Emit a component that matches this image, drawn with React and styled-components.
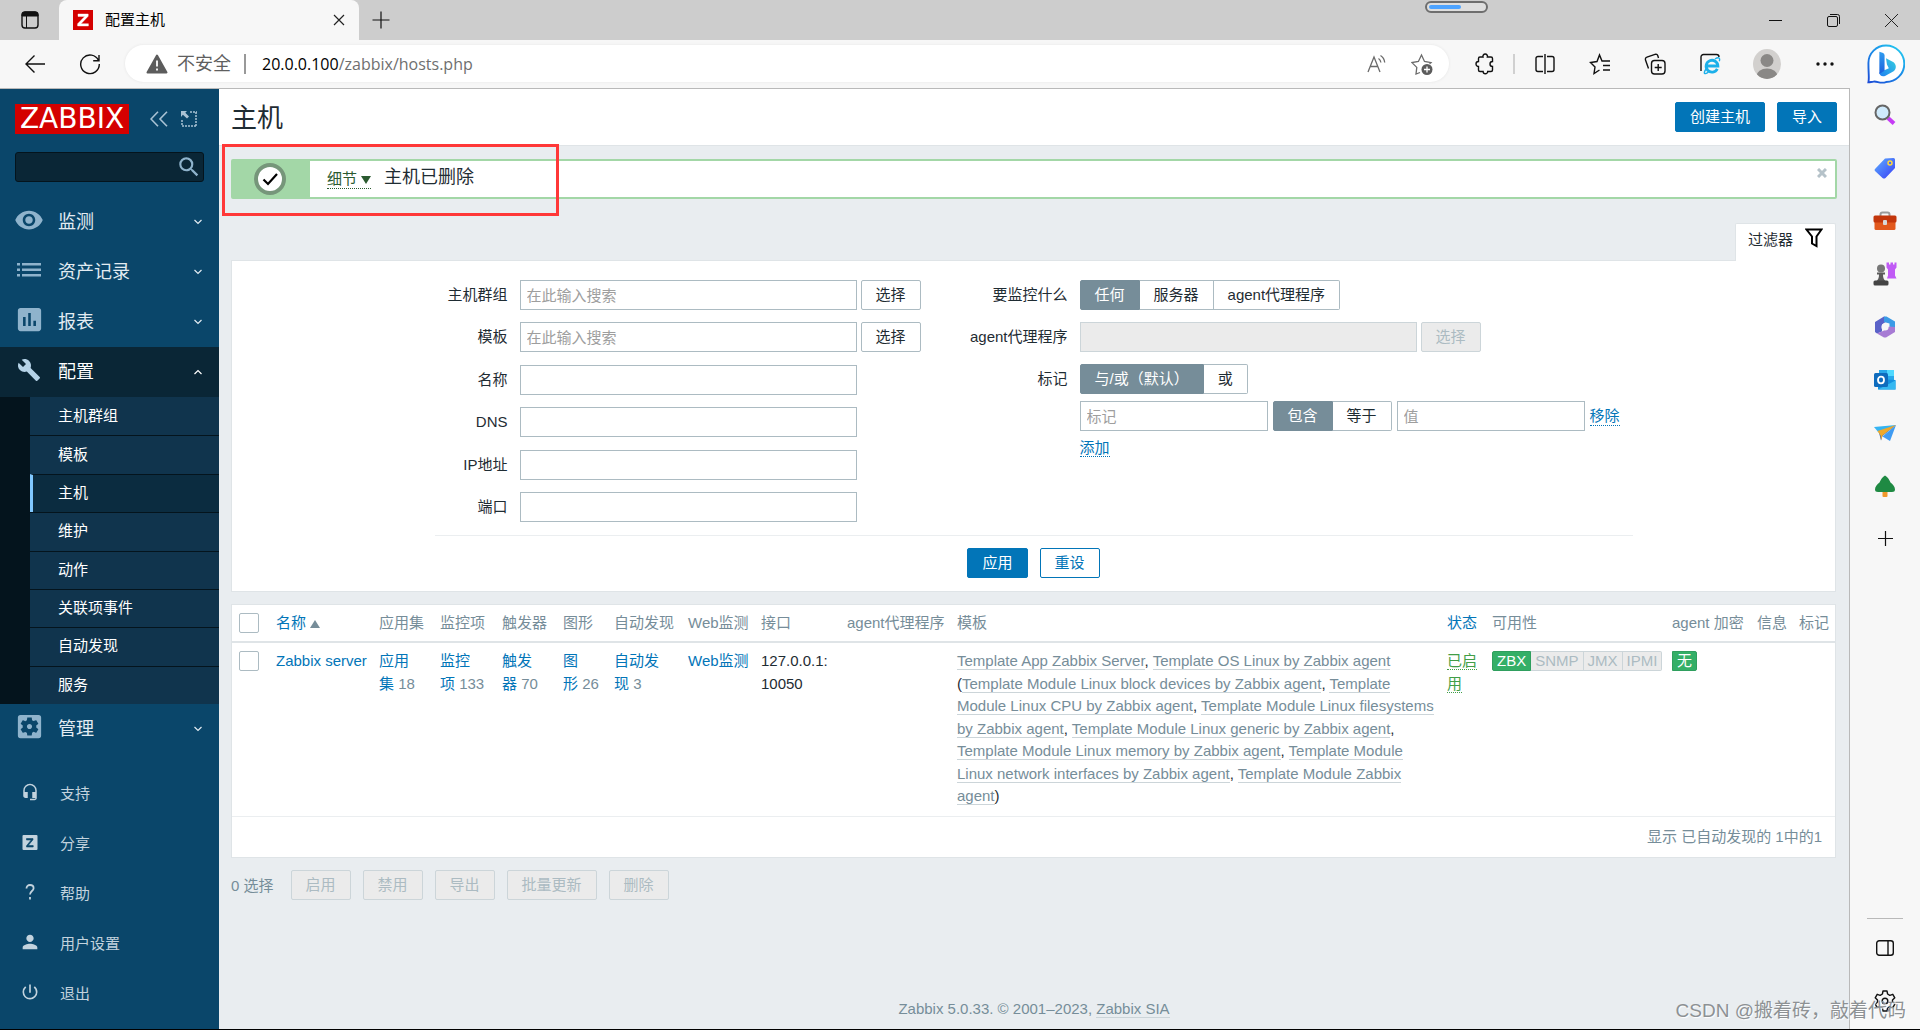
import React from 'react';
import styled, { createGlobalStyle, css } from 'styled-components';
import {
    MdVisibility,
    MdAssessment,
    MdBuild,
    MdSettingsApplications,
    MdHeadsetMic,
    MdPerson,
    MdPowerSettingsNew,
    MdSearch,
} from 'react-icons/md';

const subMenu = ['主机群组', '模板', '主机', '维护', '动作', '关联项事件', '自动发现', '服务'];

const templates = [
    'Template Module Linux block devices by Zabbix agent',
    'Template Module Linux CPU by Zabbix agent',
    'Template Module Linux filesystems by Zabbix agent',
    'Template Module Linux generic by Zabbix agent',
    'Template Module Linux memory by Zabbix agent',
    'Template Module Linux network interfaces by Zabbix agent',
    'Template Module Zabbix agent',
];

const columnWidths = [36, 103, 61, 62, 61, 51, 74, 73, 86, 110, null, 45, 180, 85, 42, 44];

const App = () => {
    return (
        <Window>
            <GlobalStyle />
            <TabBar />
            <Toolbar />
            <Body>
                <Sidebar />
                <Content>
                    <PageHeader>
                        <h1>主机</h1>
                        <HeaderButtons>
                            <Button $primary>创建主机</Button>
                            <Button $primary>导入</Button>
                        </HeaderButtons>
                    </PageHeader>
                    <Message />
                    <Filter />
                    <HostTable />
                    <ActionBar>
                        <span>0 选择</span>
                        {['启用', '禁用', '导出', '批量更新', '删除'].map((text) => (
                            <Button key={text} disabled>
                                {text}
                            </Button>
                        ))}
                    </ActionBar>
                    <PageFooter>
                        Zabbix 5.0.33. © 2001–2023, <GreyLink href="#sia">Zabbix SIA</GreyLink>
                    </PageFooter>
                    <Highlight />
                </Content>
                <EdgeSidebar />
            </Body>
            <Watermark>CSDN @搬着砖，敲着代码</Watermark>
        </Window>
    );
};

export default App;

const TabBar = () => (
    <TabStrip>
        <StripButton aria-label="标签操作" $width={59}>
            <svg width="18" height="18" viewBox="0 0 18 18" fill="none" stroke="#111">
                <rect x="1" y="1" width="16" height="16" rx="3" strokeWidth="1.4" />
                <path d="M1 4a3 3 0 0 1 3-3h10a3 3 0 0 1 3 3v1H1z" fill="#111" />
                <path d="M5.500 5v12" />
            </svg>
        </StripButton>
        <Tab>
            <Favicon viewBox="0 0 20 20">
                <rect width="20" height="20" fill="#d40000" />
                <path d="M5 4h10.200v2.200L8 13.700h7.400V16H4.600v-2.200L11.700 6.400H5z" fill="#fff" stroke="#fff" strokeWidth=".4" />
            </Favicon>
            <TabTitle>配置主机</TabTitle>
            <TabClose aria-label="关闭标签页">
                <svg width="12" height="12" viewBox="0 0 12 12" stroke="#222" strokeWidth="1.200">
                    <path d="M1 1l10 10M11 1L1 11" />
                </svg>
            </TabClose>
        </Tab>
        <StripButton aria-label="新建标签页" $width={43}>
            <svg width="18" height="18" viewBox="0 0 18 18" stroke="#111" strokeWidth="1.200">
                <path d="M9 0.500v17M0.500 9h17" />
            </svg>
        </StripButton>
        <MediaPill>
            <i />
        </MediaPill>
        <WindowControls>
            <StripButton aria-label="最小化" $width={58}>
                <svg width="13" height="13" viewBox="0 0 13 13" stroke="#111">
                    <path d="M0 6.500h13" />
                </svg>
            </StripButton>
            <StripButton aria-label="还原" $width={58}>
                <svg width="13" height="13" viewBox="0 0 13 13" fill="none" stroke="#111">
                    <rect x="0.500" y="2.500" width="10" height="10" rx="1.500" />
                    <path d="M3 .5h7.500a2 2 0 0 1 2 2V10" />
                </svg>
            </StripButton>
            <StripButton aria-label="关闭" $width={58}>
                <svg width="13" height="13" viewBox="0 0 13 13" stroke="#222">
                    <path d="M0 0l13 13M13 0L0 13" />
                </svg>
            </StripButton>
        </WindowControls>
    </TabStrip>
);

const Toolbar = () => (
    <ToolRow>
        <ToolButton aria-label="返回">
            <svg width="20" height="18" viewBox="0 0 20 18" fill="none" stroke="#111" strokeWidth="1.400">
                <path d="M9.500 .5L1 9l8.500 8.500M1 9h19" />
            </svg>
        </ToolButton>
        <ToolButton aria-label="刷新">
            <svg width="22" height="22" viewBox="0 0 22 22" fill="none" stroke="#111" strokeWidth="1.400">
                <path d="M19.500 7.500A9.300 9.300 0 1 0 20.300 11M20 2v5.800h-5.800" />
            </svg>
        </ToolButton>
        <AddressBar>
            <svg width="22" height="20" viewBox="0 0 22 20">
                <path d="M11 1.500L20.500 18.500H1.500z" fill="#5c5c5c" stroke="#5c5c5c" strokeWidth="2" strokeLinejoin="round" />
                <path d="M11 6.500v6M11 14.500v2" stroke="#fff" strokeWidth="1.800" />
            </svg>
            <Insecure>不安全</Insecure>
            <Url>
                <b>20.0.0.100</b>/zabbix/hosts.php
            </Url>
            <BarButton aria-label="大声朗读">
                <svg width="20" height="20" viewBox="0 0 20 20" fill="none" stroke="#6b6b6b" strokeWidth="1.300">
                    <path d="M1 18L7 3l6 15M3.200 12.500h7.600" />
                    <path d="M11.500 4.500c1.500 1 2.200 2.300 2.400 4M13.500 1.500c2.600 1.600 3.900 3.800 4.200 7" />
                </svg>
            </BarButton>
            <BarButton aria-label="收藏此页">
                <svg width="22" height="22" viewBox="0 0 22 22" fill="none" stroke="#6b6b6b" strokeWidth="1.300">
                    <path d="M9 19.500l-4 1.500.8-6.600L1 9.600l6.400-1.100L10.500 2l3 6.500 6.500 1.100-1.500 1.400" />
                    <circle cx="16" cy="16.500" r="5.500" fill="#5c5c5c" stroke="none" />
                    <path d="M16 13.500v6M13 16.500h6" stroke="#fff" />
                </svg>
            </BarButton>
        </AddressBar>
        <ToolButton aria-label="扩展">
            <svg width="20" height="22" viewBox="0 0 20 22" fill="none" stroke="#111" strokeWidth="1.400">
                <path d="M5 4h3a2.300 2.300 0 1 1 4.400 0H16a1.500 1.500 0 0 1 1.500 1.500V8.500a2.300 2.300 0 1 0 0 5V17a1.500 1.500 0 0 1-1.500 1.500h-3.300a2.300 2.300 0 1 1-4.600 0H5A1.500 1.500 0 0 1 3.500 17v-3.500a2.500 2.500 0 0 1 0-5V5.500A1.500 1.500 0 0 1 5 4z" />
            </svg>
        </ToolButton>
        <ToolDivider />
        <ToolButton aria-label="分屏">
            <svg width="20" height="20" viewBox="0 0 20 20" fill="none" stroke="#111" strokeWidth="1.400">
                <path d="M8 2.500H3a2 2 0 0 0-2 2v11a2 2 0 0 0 2 2h5M12 2.500h5a2 2 0 0 1 2 2v11a2 2 0 0 1-2 2h-5M10 0v20" />
            </svg>
        </ToolButton>
        <ToolButton aria-label="收藏夹">
            <svg width="22" height="22" viewBox="0 0 22 22" fill="none" stroke="#111" strokeWidth="1.400">
                <path d="M10.500 17l-5.500 3.500 1-6.500-4.500-4.500L8 8.500 10.500 2 13 8h8M14 12.500h7M14 17h7" />
            </svg>
        </ToolButton>
        <ToolButton aria-label="集锦">
            <svg width="22" height="22" viewBox="0 0 22 22" fill="none" stroke="#111" strokeWidth="1.400">
                <rect x="7.500" y="7.500" width="13.500" height="13.500" rx="3" />
                <path d="M14.200 11v7M10.700 14.500h7M4.500 15.500L1.500 7a2.200 2.200 0 0 1 1.400-2.800L11 1.300a2.200 2.200 0 0 1 2.800 1.400L14.500 5" />
            </svg>
        </ToolButton>
        <ToolButton aria-label="IE 模式">
            <svg width="22" height="22" viewBox="0 0 22 22" fill="none">
                <path d="M2 18V4a2.500 2.500 0 0 1 2.500-2.500h13A2.500 2.500 0 0 1 20 4" stroke="#111" strokeWidth="1.400" />
                <path d="M18.300 15.800A5.900 5.900 0 1 1 18.900 13H8.500" stroke="#1cb0ea" strokeWidth="2.800" />
                <path d="M7 16c-2 3-2.200 5-.5 4.600 1-.2 2-.8 3-1.600M16 6c3-2 5.500-1.800 4.300 2.200" stroke="#1cb0ea" strokeWidth="1.400" />
            </svg>
        </ToolButton>
        <ToolButton aria-label="个人资料" $width={60}>
            <svg width="28" height="30" viewBox="0 0 28 30">
                <defs>
                    <clipPath id="face">
                        <ellipse cx="14" cy="15" rx="14" ry="15" />
                    </clipPath>
                </defs>
                <g clipPath="url(#face)">
                    <rect width="28" height="30" fill="#d2d0ce" />
                    <circle cx="14" cy="11.500" r="6.500" fill="#8a8886" />
                    <ellipse cx="14" cy="27" rx="10.500" ry="7.500" fill="#8a8886" />
                </g>
            </svg>
        </ToolButton>
        <ToolButton aria-label="设置及其他">
            <svg width="18" height="4" viewBox="0 0 18 4" fill="#111">
                <circle cx="2" cy="2" r="1.700" />
                <circle cx="9" cy="2" r="1.700" />
                <circle cx="16" cy="2" r="1.700" />
            </svg>
        </ToolButton>
        <ToolButton aria-label="必应" $width={68}>
            <svg width="38" height="40" viewBox="0 0 40 42" fill="none">
                <defs>
                    <linearGradient id="bubble" x1="0" y1="1" x2="0.800" y2="0">
                        <stop offset="0" stopColor="#1b4ad6" />
                        <stop offset="0.600" stopColor="#1b8fe8" />
                        <stop offset="1" stopColor="#23c7ef" />
                    </linearGradient>
                    <linearGradient id="stem" x1="0" y1="0" x2="0" y2="1">
                        <stop offset="0" stopColor="#2f9df0" />
                        <stop offset="1" stopColor="#1b5fdc" />
                    </linearGradient>
                    <linearGradient id="bowl" x1="1" y1="0" x2="0" y2="1">
                        <stop offset="0" stopColor="#36d0e0" />
                        <stop offset="1" stopColor="#1f7ff0" />
                    </linearGradient>
                </defs>
                <path
                    d="M20 1.500a18.500 18.500 0 0 1 0 38.500c-6 2-9-1-13-.5-2.500.3-4 .8-5.500.8C2.500 36 1.500 32 1.500 20A18.500 18.500 0 0 1 20 1.500z"
                    fill="#fff"
                    stroke="url(#bubble)"
                    strokeWidth="2"
                />
                <path d="M20 15l7 3.500c4 2 4.500 7.500 1 10l-9 5c-3 1.500-6-.5-6-3.500l10-4.500-2-4z" fill="url(#bowl)" />
                <path d="M13 8l4 1.500q1.500.7 1.500 2.500V28L13 31.500z" fill="url(#stem)" />
            </svg>
        </ToolButton>
    </ToolRow>
);

const Chevron = ({ up }) => (
    <svg width="8" height="6" viewBox="0 0 8 6" fill="none" stroke="currentColor" strokeWidth="1.200">
        <path d={up ? 'M.5 5L4 1.500 7.500 5' : 'M.5 1L4 4.500 7.500 1'} />
    </svg>
);

const MenuItem = ({ icon, text, open }) => (
    <MenuLink href="#menu" $open={open}>
        <MenuIcon $open={open}>{icon}</MenuIcon>
        <span>{text}</span>
        <Chevron up={open} />
    </MenuLink>
);

const Sidebar = () => (
    <Side>
        <LogoRow>
            <Logo>ZABBIX</Logo>
            <SideButton aria-label="收起侧栏">
                <svg width="18" height="16" viewBox="0 0 18 16" fill="none" stroke="#a9c2d4" strokeWidth="1.600">
                    <path d="M8 .8L1 8l7 7.200M17 .8L10 8l7 7.200" />
                </svg>
            </SideButton>
            <SideButton aria-label="隐藏侧栏">
                <svg width="16" height="16" viewBox="0 0 16 16" fill="none" stroke="#a9c2d4" strokeWidth="1.500">
                    <path d="M9 1h7M15 1v14M1 9v6M1 15h14" strokeDasharray="2 1" />
                    <path d="M0 0h6L4.300 1.700 8 5.500 6 7.500 1.900 3.800 0 6z" fill="#a9c2d4" stroke="none" />
                </svg>
            </SideButton>
        </LogoRow>
        <SearchBox>
            <input type="text" aria-label="搜索" />
            <button type="button" aria-label="搜索">
                <MdSearch size={26} />
            </button>
        </SearchBox>
        <MenuItem icon={<MdVisibility size={30} />} text="监测" />
        <MenuItem
            icon={
                <svg width="24" height="14" viewBox="0 0 24 14" fill="currentColor">
                    <path d="M0 0h3v2.500H0zM5 0h19v2.500H5zM0 5.500h3V8H0zM5 5.500h19V8H5zM0 11h3v2.500H0zM5 11h19v2.500H5z" />
                </svg>
            }
            text="资产记录"
        />
        <MenuItem icon={<MdAssessment size={31} />} text="报表" />
        <MenuItem icon={<MdBuild size={24} />} text="配置" open />
        <SubMenu>
            {subMenu.map((text) => (
                <SubItem key={text} href="#sub" $active={text === '主机'}>
                    {text}
                </SubItem>
            ))}
        </SubMenu>
        <MenuItem icon={<MdSettingsApplications size={31} />} text="管理" />
        <UserMenu>
            <UserLink href="#support">
                <MdHeadsetMic size={18} />
                支持
            </UserLink>
            <UserLink href="#share">
                <svg width="18" height="15" viewBox="0 0 18 15">
                    <rect x="1.500" width="15" height="15" rx="1" fill="currentColor" />
                    <path d="M5.500 3.500h6.500v1.200L7.200 10.500H12.200V12H5.500v-1.200L10.200 5H5.500z" fill="#0a466a" stroke="#0a466a" strokeWidth=".6" />
                </svg>
                分享
            </UserLink>
            <UserLink href="#help">
                <svg width="18" height="16" viewBox="0 0 18 16" fill="none" stroke="currentColor" strokeWidth="1.800">
                    <path d="M5.500 4.500C5.500 2.200 7 1 9 1s3.600 1.200 3.600 3.200C12.600 7 9 7 9 10.500M9 13v2.500" />
                </svg>
                帮助
            </UserLink>
            <UserLink href="#user">
                <MdPerson size={22} />
                用户设置
            </UserLink>
            <UserLink href="#exit">
                <MdPowerSettingsNew size={20} />
                退出
            </UserLink>
        </UserMenu>
    </Side>
);

const Message = () => (
    <MessageBox>
        <MessageMark>
            <svg width="32" height="32" viewBox="0 0 32 32">
                <circle cx="16" cy="16" r="14" fill="#fff" stroke="#76967a" strokeWidth="4" />
                <path d="M9.500 16.500l4.500 4.500 9-10" fill="none" stroke="#000" strokeWidth="2.200" />
            </svg>
        </MessageMark>
        <MessageText>
            <Details href="#details">
                细节
                <svg width="10" height="8" viewBox="0 0 10 8">
                    <path d="M0 0h10L5 8z" fill="#2b5a30" />
                </svg>
            </Details>
            <span>主机已删除</span>
        </MessageText>
        <MessageClose aria-label="关闭消息">
            <svg width="10" height="10" viewBox="0 0 10 10" stroke="#b5c2c9" strokeWidth="3">
                <path d="M1 1l8 8M9 1L1 9" />
            </svg>
        </MessageClose>
    </MessageBox>
);

const Segments = ({ name, options }) => (
    <SegmentGroup>
        {options.map((text, index) => (
            <Segment key={text}>
                <input type="radio" name={name} defaultChecked={index === 0} />
                <span>{text}</span>
            </Segment>
        ))}
    </SegmentGroup>
);

const Field = ({ id, text, children }) => (
    <FieldRow>
        <label htmlFor={id}>{text}</label>
        {children}
    </FieldRow>
);

const Filter = () => (
    <FilterArea>
        <FilterTab href="#filter">
            过滤器
            <svg width="18" height="20" viewBox="0 0 18 20" fill="none" stroke="#000" strokeWidth="2">
                <path d="M1.500 1.500h15L11.500 8.500V18L7 15.500V8.500z" />
            </svg>
        </FilterTab>
        <FilterPanel>
            <FilterForm>
                <FormColumn $label={73}>
                    <Field id="groups" text="主机群组">
                        <TextInput id="groups" placeholder="在此输入搜索" />
                        <Button>选择</Button>
                    </Field>
                    <Field id="templates" text="模板">
                        <TextInput id="templates" placeholder="在此输入搜索" />
                        <Button>选择</Button>
                    </Field>
                    <Field id="name" text="名称">
                        <TextInput id="name" />
                    </Field>
                    <Field id="dns" text="DNS">
                        <TextInput id="dns" />
                    </Field>
                    <Field id="ip" text="IP地址">
                        <TextInput id="ip" />
                    </Field>
                    <Field id="port" text="端口">
                        <TextInput id="port" />
                    </Field>
                </FormColumn>
                <FormColumn $label={111}>
                    <Field text="要监控什么">
                        <Segments name="monitored" options={['任何', '服务器', 'agent代理程序']} />
                    </Field>
                    <Field id="proxy" text="agent代理程序">
                        <TextInput id="proxy" disabled />
                        <Button disabled>选择</Button>
                    </Field>
                    <Field text="标记">
                        <Segments name="evaltype" options={['与/或（默认）', '或']} />
                    </Field>
                    <TagRow>
                        <TextInput $width={188} placeholder="标记" aria-label="标记" />
                        <Segments name="operator" options={['包含', '等于']} />
                        <TextInput $width={188} placeholder="值" aria-label="值" />
                        <DottedLink href="#remove">移除</DottedLink>
                    </TagRow>
                    <AddRow>
                        <DottedLink href="#add">添加</DottedLink>
                    </AddRow>
                </FormColumn>
            </FilterForm>
            <FilterButtons>
                <Button $primary>应用</Button>
                <Button $outline>重设</Button>
            </FilterButtons>
        </FilterPanel>
    </FilterArea>
);

const Count = ({ text, value }) => (
    <td>
        <a href="#count">{text}</a>
        {'\u00a0'}
        <Muted>{value}</Muted>
    </td>
);

const HostTable = () => (
    <TablePanel>
        <Table>
            <colgroup>
                {columnWidths.map((width, index) => (
                    <col key={index} style={width ? { width } : undefined} />
                ))}
            </colgroup>
            <thead>
                <tr>
                    <th>
                        <Checkbox type="checkbox" aria-label="全选" />
                    </th>
                    <th>
                        <a href="#sort">
                            名称
                            <SortArrow viewBox="0 0 10 8">
                                <path d="M0 8L5 0l5 8z" fill="#768d99" />
                            </SortArrow>
                        </a>
                    </th>
                    <th>应用集</th>
                    <th>监控项</th>
                    <th>触发器</th>
                    <th>图形</th>
                    <th>自动发现</th>
                    <th>Web监测</th>
                    <th>接口</th>
                    <th>agent代理程序</th>
                    <th>模板</th>
                    <th>
                        <a href="#status">状态</a>
                    </th>
                    <th>可用性</th>
                    <th>agent 加密</th>
                    <th>信息</th>
                    <th>标记</th>
                </tr>
            </thead>
            <tbody>
                <tr>
                    <td>
                        <Checkbox type="checkbox" aria-label="Zabbix server" />
                    </td>
                    <td>
                        <a href="#host">Zabbix server</a>
                    </td>
                    <Count text="应用集" value="18" />
                    <Count text="监控项" value="133" />
                    <Count text="触发器" value="70" />
                    <Count text="图形" value="26" />
                    <Count text="自动发现" value="3" />
                    <td>
                        <NoWrapLink href="#web">Web监测</NoWrapLink>
                    </td>
                    <td>127.0.0.1: 10050</td>
                    <td />
                    <td>
                        <GreyLink href="#t">Template App Zabbix Server</GreyLink>,{' '}
                        <GreyLink href="#t">Template OS Linux by Zabbix agent</GreyLink> (
                        {templates.map((name, index) => (
                            <React.Fragment key={name}>
                                {index > 0 && ', '}
                                <GreyLink href="#t">{name}</GreyLink>
                            </React.Fragment>
                        ))}
                        )
                    </td>
                    <td>
                        <StatusLink href="#enabled">已启用</StatusLink>
                    </td>
                    <td>
                        <Badges>
                            <Badge $green>ZBX</Badge>
                            <Badge>SNMP</Badge>
                            <Badge>JMX</Badge>
                            <Badge>IPMI</Badge>
                        </Badges>
                    </td>
                    <td>
                        <Badges>
                            <Badge $green>无</Badge>
                        </Badges>
                    </td>
                    <td />
                    <td />
                </tr>
            </tbody>
        </Table>
        <TableStats>显示 已自动发现的 1中的1</TableStats>
    </TablePanel>
);

const EdgeSidebar = () => (
    <EdgeSide>
        <EdgeButton aria-label="搜索">
            <svg width="22" height="22" viewBox="0 0 22 22" fill="none">
                <path d="M14 14l6 5.500" stroke="#c63cf5" strokeWidth="4" />
                <circle cx="8.500" cy="8.500" r="7" fill="#cfeafc" stroke="#666" strokeWidth="2" />
            </svg>
        </EdgeButton>
        <EdgeButton aria-label="购物">
            <svg width="22" height="22" viewBox="0 0 22 22">
                <defs>
                    <linearGradient id="tag" x1="0" y1="0" x2="1" y2="1">
                        <stop offset="0" stopColor="#5db0ff" />
                        <stop offset="1" stopColor="#3a3df5" />
                    </linearGradient>
                </defs>
                <path d="M1 12L11 1.500 19.500 1q1.500 0 1.500 1.500V11L11.500 21q-1.500 1-3 0L1 14q-1-1 0-2z" fill="url(#tag)" />
                <circle cx="16" cy="6" r="2" fill="#4a6cf7" stroke="#ffd83b" strokeWidth="1.500" />
            </svg>
        </EdgeButton>
        <EdgeButton aria-label="工具">
            <svg width="24" height="20" viewBox="0 0 24 20">
                <path d="M7.500 5V3.500a2 2 0 0 1 2-2h5a2 2 0 0 1 2 2V5" fill="none" stroke="#9a9a9a" strokeWidth="2" />
                <rect x="1.500" y="9" width="21" height="10" rx="1.500" fill="#e2581c" />
                <rect x="0.500" y="4.500" width="23" height="7" rx="1.500" fill="#c3360b" />
                <rect x="10" y="9" width="4" height="5" rx="1" fill="#d8d8d8" />
            </svg>
        </EdgeButton>
        <EdgeButton aria-label="游戏">
            <svg width="24" height="24" viewBox="0 0 24 24">
                <path d="M13.500 0.500h2.500v2h1.500v-2h2.500v2h1.500v-2H23.500v5l-1.500 2v6l1.500 3H14l1-3v-6l-1.500-2z" fill="#c05af5" />
                <circle cx="8" cy="6.500" r="4" fill="#777" />
                <path d="M4 10.500h8v2h-2c0 3 .6 5 2.500 6.500H3.500C5.400 17.500 6 15.500 6 12.500H4z" fill="#5b5b5b" />
                <rect x="0.500" y="18.500" width="15" height="5" rx="1.500" fill="#444" />
            </svg>
        </EdgeButton>
        <EdgeButton aria-label="Microsoft 365">
            <svg width="22" height="22" viewBox="0 0 22 22">
                <path d="M1 6L10 .5l6 3-6 3.500-2 1.500v7L3 17.500 1 16z" fill="#5a62c8" />
                <path d="M10 .5h2.500L21 5.500v8l-5.500-3V7.500L10 6z" fill="#3b9be6" />
                <path d="M21 11v5l-9 5.500h-2L3 17.500 9 15l6-4.500z" fill="#a77bd4" />
                <circle cx="11" cy="11" r="3.600" fill="#f7f7f7" />
            </svg>
        </EdgeButton>
        <EdgeButton aria-label="Outlook">
            <svg width="22" height="22" viewBox="0 0 22 22">
                <path d="M5 1h15v10H5z" fill="#28a8ea" />
                <path d="M13 1h7v6h-7z" fill="#50d9ff" />
                <path d="M4 10l17.500 1v9.500H4z" fill="#1490df" />
                <path d="M4 20.500l17.500-9v9z" fill="#35b8f1" />
                <rect y="4" width="14" height="14" rx="1.500" fill="#0f6cbd" />
                <ellipse cx="7" cy="11" rx="3" ry="3.300" fill="none" stroke="#fff" strokeWidth="1.800" />
            </svg>
        </EdgeButton>
        <EdgeButton aria-label="投放">
            <svg width="22" height="18" viewBox="0 0 22 18">
                <path d="M0 3L22 1 5 9z" fill="#35b4f2" />
                <path d="M5 8.500L22 1 8.500 12 7 16.500z" fill="#1f5fc4" />
                <path d="M22 1l-6 16-7.500-4.500z" fill="#3f9bf2" />
                <path d="M22 1L3.500 7l3 4.500.5 5 1.500-5z" fill="#efa92a" />
            </svg>
        </EdgeButton>
        <EdgeButton aria-label="树木">
            <svg width="22" height="22" viewBox="0 0 22 22">
                <rect x="8.500" y="15" width="5" height="7" rx="1" fill="#f0992c" />
                <path d="M11 .5c3 2 4.500 4.500 5.500 7C19 9 21 12 21 14.500q0 2.500-3 2.500H4q-3 0-3-2.500C1 12 3 9 5.500 7.500 6.500 5 8 2.500 11 .5z" fill="#1f8a43" />
            </svg>
        </EdgeButton>
        <EdgeButton aria-label="添加">
            <svg width="15" height="15" viewBox="0 0 15 15" stroke="#111" strokeWidth="1.200">
                <path d="M7.500 0v15M0 7.500h15" />
            </svg>
        </EdgeButton>
        <EdgeBottom>
            <EdgeButton aria-label="侧栏">
                <svg width="18" height="16" viewBox="0 0 18 16" fill="none" stroke="#111" strokeWidth="1.400">
                    <rect x="0.700" y="0.700" width="16.600" height="14.600" rx="2.500" />
                    <path d="M12 1v14" />
                </svg>
            </EdgeButton>
            <EdgeButton aria-label="设置">
                <svg width="22" height="22" viewBox="0 0 22 22" fill="none" stroke="#111" strokeWidth="1.400" strokeLinejoin="round">
                    <path d="M9 1h4l.6 3 2.200 1.300 3-1 2 3.500L18.500 10v2l2.300 2.200-2 3.500-3-1-2.200 1.300-.6 3H9l-.6-3-2.200-1.300-3 1-2-3.500L3.500 12v-2L1.200 7.800l2-3.500 3 1L8.400 4z" />
                    <circle cx="11" cy="11" r="2.800" />
                </svg>
            </EdgeButton>
        </EdgeBottom>
    </EdgeSide>
);

const GlobalStyle = createGlobalStyle`
    * {
        box-sizing: border-box;
    }

    body {
        margin: 0;
        font-family: "Liberation Sans", "Noto Sans CJK SC", sans-serif;
        font-size: 15px;
        color: #1f2c33;
    }

    button, input {
        font-family: inherit;
        font-size: inherit;
    }

    a {
        color: #0275b8;
        text-decoration: none;
    }
`;

const Window = styled.div`
    position: relative;
    display: flex;
    flex-direction: column;
    min-height: 100vh;
    background-color: #f7f7f7;
    border-bottom: 1px solid #000;
`;

const iconButton = css`
    display: flex;
    align-items: center;
    justify-content: center;
    padding: 0;
    border: none;
    background: none;
`;

const TabStrip = styled.div`
    display: flex;
    height: 40px;
    background-color: #cdcdcd;
`;

const StripButton = styled.button`
    ${iconButton}
    width: ${({ $width }) => $width}px;
    height: 40px;
`;

const Tab = styled.div`
    display: flex;
    align-items: center;
    width: 300px;
    padding: 0 14px;
    border-radius: 8px 8px 0 0;
    background-color: #f7f7f7;
`;

const Favicon = styled.svg`
    width: 20px;
    height: 20px;
`;

const TabTitle = styled.span`
    flex: 1;
    margin-left: 12px;
    line-height: 32px;
    color: #000;
`;

const TabClose = styled.button`
    ${iconButton}
    width: 12px;
`;

const MediaPill = styled.div`
    width: 63px;
    height: 12px;
    margin: 1px 0 0 auto;
    padding: 2px;
    border: 2px solid #6e6e6e;
    border-radius: 6px;
    background-color: #dedede;

    i {
        display: block;
        width: 32px;
        height: 4px;
        border-radius: 2px;
        background-color: #4da3ff;
    }
`;

const WindowControls = styled.div`
    display: flex;
    margin-left: 258px;
`;

const ToolRow = styled.div`
    display: flex;
    align-items: center;
    height: 48px;
    padding: 0 0 1px 7px;
`;

const ToolButton = styled.button`
    ${iconButton}
    flex: none;
    width: ${({ $width = 55 }) => $width}px;
    height: 46px;
`;

const ToolDivider = styled.div`
    width: 2px;
    height: 20px;
    margin: 0 2px 0 1px;
    background-color: #d0d0d0;
`;

const AddressBar = styled.div`
    display: flex;
    align-items: center;
    flex: 1;
    height: 37px;
    margin: 0 8px;
    padding: 0 5px 0 21px;
    border-radius: 19px;
    background-color: #fff;
    box-shadow: 0 0 3px #e4e4e4;
`;

const Insecure = styled.span`
    margin-left: 9px;
    padding-right: 13px;
    border-right: 2px solid #999;
    font-size: 18px;
    line-height: 20px;
    color: #5f5f5f;
`;

const Url = styled.span`
    flex: 1;
    margin-left: 16px;
    font-family: "Open Sans", sans-serif;
    font-size: 16px;
    color: #6f6f6f;

    b {
        font-weight: 400;
        color: #000;
    }
`;

const BarButton = styled.button`
    ${iconButton}
    width: 45px;
    height: 37px;
`;

const Body = styled.div`
    display: flex;
    flex: 1;
`;

const Side = styled.nav`
    display: flex;
    flex-direction: column;
    width: 219px;
    border-top: 1px solid #b9b9b9;
    background-color: #0a466a;
`;

const LogoRow = styled.div`
    display: flex;
    align-items: center;
    padding: 15px 15px 0;
`;

const Logo = styled.div`
    flex: none;
    width: 114px;
    margin-right: 21px;
    background-color: #d40000;
    font-family: "DejaVu Sans", sans-serif;
    font-size: 28px;
    line-height: 30px;
    text-align: center;
    color: #fff;
`;

const SideButton = styled.button`
    ${iconButton}
    flex: none;

    & + & {
        margin-left: 13px;
    }
`;

const SearchBox = styled.div`
    display: flex;
    height: 30px;
    margin: 18px 15px 15px;
    border: 1px solid #04141d;
    border-radius: 3px;
    background-color: #0a2636;

    input {
        flex: 1;
        min-width: 0;
        border: none;
        background: none;
        color: #fff;
    }

    button {
        ${iconButton}
        width: 28px;
        color: #8fb3cc;
    }
`;

const MenuLink = styled.a`
    display: flex;
    align-items: center;
    height: 50px;
    padding-right: 17px;
    background-color: ${({ $open }) => ($open ? '#0a2636' : 'transparent')};
    color: ${({ $open }) => ($open ? '#fff' : '#e3ecf2')};
    font-size: 18px;
    line-height: 24px;

    span {
        flex: 1;
    }
`;

const MenuIcon = styled.i`
    display: flex;
    flex: none;
    justify-content: center;
    width: 58px;
    padding-bottom: 5px;
    color: ${({ $open }) => ($open ? '#b5d3e8' : '#8fb3cc')};
`;

const SubMenu = styled.div`
    display: grid;
    grid-auto-rows: 1fr;
    min-height: 307px;
    border-left: 30px solid #04141d;
`;

const SubItem = styled.a`
    display: flex;
    align-items: center;
    padding: 0 0 4px ${({ $active }) => ($active ? 25 : 28)}px;
    border-left: ${({ $active }) => ($active ? '3px solid #80c8ff' : 'none')};
    background-color: ${({ $active }) => ($active ? '#0b2c40' : '#10344d')};
    color: #fff;

    & + & {
        border-top: 1px solid #04141d;
    }
`;

const UserMenu = styled.div`
    display: flex;
    flex-direction: column;
    padding-top: 15px;
`;

const UserLink = styled.a`
    display: flex;
    align-items: center;
    height: 50px;
    padding-bottom: 4px;
    color: #c3d3de;

    svg {
        flex: none;
        width: 60px;
    }
`;

const Content = styled.main`
    position: relative;
    display: flex;
    flex-direction: column;
    flex: 1;
    min-width: 0;
    border-top: 1px solid #b9b9b9;
    border-right: 1px solid #b9b9b9;
    background-color: #e9edf0;
`;

const PageHeader = styled.header`
    display: flex;
    align-items: center;
    justify-content: space-between;
    height: 57px;
    padding: 0 12px;
    border-bottom: 1px solid #dfe4e7;
    background-color: #fff;

    h1 {
        margin: 0;
        padding-top: 2px;
        font-size: 26px;
        font-weight: 400;
        line-height: 36px;
    }
`;

const HeaderButtons = styled.div`
    display: flex;
    gap: 12px;
`;

const Button = styled.button`
    flex: none;
    height: 30px;
    padding: 0 14px;
    border: 1px solid #acbbc2;
    border-radius: 2px;
    background-color: #fff;
    color: #1f2c33;
    line-height: 26px;
    white-space: nowrap;

    ${({ $primary }) =>
        $primary &&
        css`
            border-color: #0275b8;
            background-color: #0275b8;
            color: #fff;
        `}

    ${({ $outline }) =>
        $outline &&
        css`
            border-color: #0275b8;
            color: #0275b8;
        `}

    &:disabled {
        border-color: #ccd5d9;
        background-color: #ebebeb;
        color: #acbbc2;
    }
`;

const MessageBox = styled.output`
    display: flex;
    height: 40px;
    margin: 13px 12px 0;
    border: 2px solid #a3d7a7;
    border-radius: 2px;
    background-color: #fff;
`;

const MessageMark = styled.div`
    display: flex;
    align-items: center;
    justify-content: center;
    width: 77px;
    padding-right: 3px;
    background-color: #a3d7a7;
`;

const MessageText = styled.div`
    display: flex;
    align-items: center;
    flex: 1;
    gap: 13px;
    padding-left: 17px;

    span {
        padding-bottom: 4px;
        font-size: 18px;
        line-height: 24px;
    }
`;

const Details = styled.a`
    display: flex;
    align-items: center;
    gap: 4px;
    border-bottom: 1px dotted #2b5a30;
    line-height: 18px;
    color: #2b5a30;

    svg {
        margin-top: 2px;
    }
`;

const MessageClose = styled.button`
    ${iconButton}
    width: 10px;
    height: 24px;
    margin-right: 8px;
`;

const FilterArea = styled.section`
    display: flex;
    flex-direction: column;
    align-items: flex-end;
    padding: 24px 13px 0 12px;
`;

const FilterTab = styled.a`
    display: flex;
    align-items: flex-start;
    gap: 12px;
    height: 38px;
    margin-bottom: -1px;
    padding: 4px 12px;
    border: 1px solid #dfe4e7;
    border-bottom: none;
    border-radius: 2px 2px 0 0;
    background-color: #fff;
    color: #1f2c33;
    z-index: 1;
`;

const FilterPanel = styled.form`
    display: flex;
    flex-direction: column;
    align-items: center;
    width: 100%;
    padding: 19px 0 13px;
    border: 1px solid #dfe4e7;
    background-color: #fff;
`;

const FilterForm = styled.div`
    display: flex;
    gap: 36px;
    width: 1198px;
    max-width: 100%;
    padding-bottom: 13px;
    border-bottom: 1px solid #ebeef0;
`;

const FormColumn = styled.div`
    display: flex;
    flex-direction: column;
    justify-content: space-between;
    min-height: 242px;

    label {
        min-width: ${({ $label }) => $label}px;
    }

    &:nth-child(2) {
        flex: 1;
        justify-content: flex-start;
        gap: 12px;
    }
`;

const FieldRow = styled.div`
    display: flex;
    align-items: center;
    gap: 4px;

    > label {
        margin-right: 8px;
        line-height: 26px;
        text-align: right;
        white-space: nowrap;
    }
`;

const TextInput = styled.input`
    width: ${({ $width = 337 }) => $width}px;
    height: 30px;
    padding: 0 6px;
    border: 1px solid #acbbc2;
    background-color: #fff;
    color: #1f2c33;

    &::placeholder {
        color: #9e9e9e;
    }

    &:disabled {
        border-color: #ccd5d9;
        background-color: #ebebeb;
    }
`;

const SegmentGroup = styled.div`
    display: flex;
`;

const Segment = styled.label`
    display: flex;

    && {
        min-width: 0;
    }

    input {
        appearance: none;
        width: 0;
        height: 0;
        margin: 0;
    }

    span {
        height: 30px;
        padding: 0 14px;
        border: 1px solid #acbbc2;
        border-left-width: 0;
        background-color: #fff;
        line-height: 27px;
        white-space: nowrap;
    }

    &:first-child span {
        border-left-width: 1px;
        border-radius: 2px 0 0 2px;
    }

    &:last-child span {
        border-radius: 0 2px 2px 0;
    }

    input:checked + span {
        border-color: #768d99;
        background-color: #768d99;
        color: #fff;
    }
`;

const TagRow = styled.div`
    display: flex;
    align-items: center;
    gap: 5px;
    margin: -5px 0 0 123px;
`;

const AddRow = styled.div`
    margin: -4px 0 0 123px;
`;

const DottedLink = styled.a`
    border-bottom: 1px dotted #0275b8;
    line-height: 18px;
`;

const FilterButtons = styled.div`
    display: flex;
    gap: 12px;
    padding-top: 12px;
`;

const TablePanel = styled.section`
    margin: 12px 13px 0 12px;
    border: 1px solid #dfe4e7;
    background-color: #fff;
`;

const Table = styled.table`
    width: 100%;
    table-layout: fixed;
    border-collapse: collapse;

    th, td {
        padding: 7px 4px 8px 8px;
        text-align: left;
        vertical-align: top;
        line-height: 1.5;

        &:first-child {
            padding-left: 7px;
        }
    }

    th {
        height: 37px;
        padding-bottom: 5px;
        border-bottom: 2px solid #dfe4e7;
        font-weight: 400;
        color: #768d99;
        white-space: nowrap;
    }

    td {
        border-bottom: 1px solid #ebeef0;
    }
`;

const Checkbox = styled.input`
    appearance: none;
    display: block;
    width: 20px;
    height: 20px;
    margin: 1px 0;
    border: 1px solid #acbbc2;
    border-radius: 2px;
    background-color: #fff;
`;

const SortArrow = styled.svg`
    width: 10px;
    height: 8px;
    margin-left: 4px;
`;

const Muted = styled.span`
    color: #768d99;
`;

const NoWrapLink = styled.a`
    white-space: nowrap;
`;

const GreyLink = styled.a`
    border-bottom: 1px solid #ccd5d9;
    color: #768d99;
`;

const StatusLink = styled.a`
    border-bottom: 1px dotted #429e47;
    color: #429e47;
`;

const Badges = styled.div`
    display: flex;
    margin-top: 1px;
`;

const Badge = styled.span`
    height: 20px;
    padding: 0 4px;
    border: 1px solid ${({ $green }) => ($green ? '#2f9f5e' : '#ccd5d9')};
    background-color: ${({ $green }) => ($green ? '#34af67' : '#ebebeb')};
    color: ${({ $green }) => ($green ? '#fff' : '#acbbc2')};
    line-height: 18px;

    & + & {
        border-left-width: 0;
    }

    &:first-child {
        border-radius: 2px 0 0 2px;
    }

    &:last-child {
        border-radius: 0 2px 2px 0;
    }
`;

const TableStats = styled.div`
    padding: 0 13px;
    line-height: 40px;
    text-align: right;
    color: #768d99;
`;

const ActionBar = styled.div`
    display: flex;
    align-items: center;
    gap: 12px;
    padding: 12px 12px 0;
    color: #768d99;

    span {
        margin-right: 5px;
    }
`;

const PageFooter = styled.footer`
    margin-top: auto;
    padding-bottom: 10px;
    line-height: 20px;
    text-align: center;
    color: #768d99;
`;

// red frame round the "host deleted" message
const Highlight = styled.div`
    position: absolute;
    top: 55px;
    left: 3px;
    width: 337px;
    height: 72px;
    border: 3px solid #ff3838;
    pointer-events: none;
`;

const EdgeSide = styled.aside`
    display: flex;
    flex-direction: column;
    align-items: center;
    width: 70px;
`;

const EdgeButton = styled.button`
    ${iconButton}
    width: 36px;
    height: 53px;
`;

const EdgeBottom = styled.div`
    margin-top: auto;
    padding: 2px 0;
    border-top: 1px solid #b9b9b9;
`;

const Watermark = styled.div`
    position: absolute;
    right: 14px;
    bottom: 3px;
    font-size: 19px;
    line-height: 30px;
    color: #8d9194;
    text-shadow: 1px 1px 1px #fff;
    pointer-events: none;
`;
